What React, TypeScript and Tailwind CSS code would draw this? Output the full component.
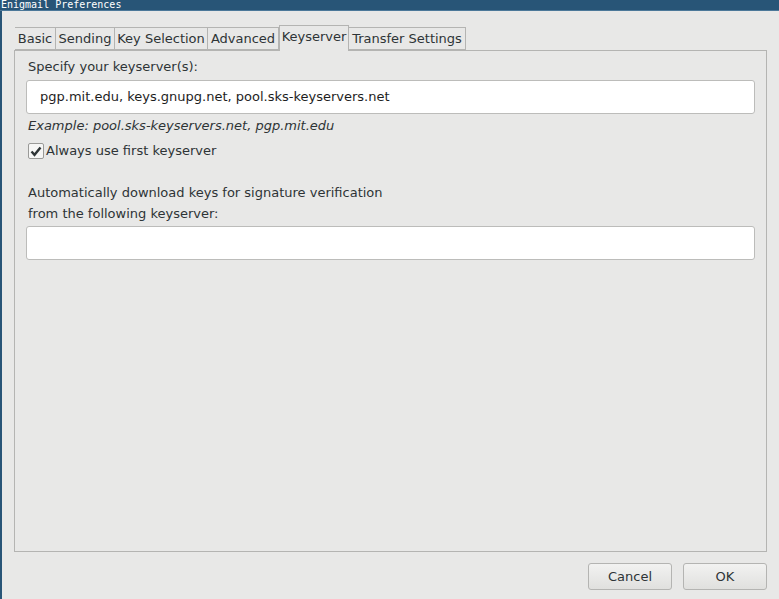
import React from 'react';

const tabs = [
  { t: 'Basic', w: 'w-[41px] border-l' },
  { t: 'Sending', w: 'w-[59px]' },
  { t: 'Key Selection', w: 'w-[93px]' },
  { t: 'Advanced', w: 'w-[71px]' },
  { t: 'Keyserver', w: 'w-[70px]', active: true },
  { t: 'Transfer Settings', w: 'w-[117px]' },
];

function Check() {
  return (
    <span className="flex h-[16px] w-[16px] items-center justify-center rounded-[2px] border border-[#9a9a98] bg-[#f6f6f5]">
      <svg width="12" height="11" viewBox="0 0 12 11">
        <path d="M1.5 5.5 L4.5 8.8 L10.5 1.5" fill="none" stroke="#2e3436" strokeWidth="2.4" />
      </svg>
    </span>
  );
}

export default function App() {
  return (
    <div className="flex h-[599px] w-[779px] flex-col bg-[#e8e8e7] font-['DejaVu_Sans',sans-serif] text-[13px] text-[#2e3436]">
      <div className="h-[11px] shrink-0 border-b border-[#4c7899] bg-[#285577] pl-[1px] font-['DejaVu_Sans_Mono',monospace] text-[10px] leading-[10px] text-white">
        Enigmail Preferences
      </div>
      <div className="flex flex-1 flex-col border-l-2 border-[#285577]">
        <div className="flex items-end pl-[13px] pt-[14px]">
          {tabs.map((x) =>
            x.active ? (
              <div
                key={x.t}
                className={`relative z-10 -mb-px flex h-[26px] items-center justify-center border border-b-0 border-[#b4b4b2] bg-[#e8e8e7] pb-[3px] ${x.w}`}
              >
                {x.t}
              </div>
            ) : (
              <div
                key={x.t}
                className={`flex h-[23px] items-center justify-center border border-l-0 border-[#b4b4b2] ${x.w}`}
              >
                {x.t}
              </div>
            )
          )}
        </div>
        <div className="ml-[12px] mr-[12px] h-[502px] border border-[#b4b4b2] px-[11px] pt-[7px]">
          <div className="pl-[2px] leading-[18px]">Specify your keyserver(s):</div>
          <div className="mt-[4px] flex h-[34px] items-center rounded-[3px] border border-[#bcbcba] bg-white pl-[13px] text-[#1e1e1e]">
            pgp.mit.edu, keys.gnupg.net, pool.sks-keyservers.net
          </div>
          <div className="mt-[3px] pl-[2px] italic leading-[18px]">Example: pool.sks-keyservers.net, pgp.mit.edu</div>
          <div className="mt-[7px] flex items-center pl-[2px] leading-[18px]">
            <Check />
            <span className="ml-[2px]">Always use first keyserver</span>
          </div>
          <div className="mt-[22px] pl-[2px] leading-[21px]">
            Automatically download keys for signature verification
            <br />
            from the following keyserver:
          </div>
          <div className="mt-[2px] h-[34px] rounded-[3px] border border-[#bcbcba] bg-white" />
        </div>
        <div className="flex justify-end gap-[11px] pr-[12px] pt-[11px]">
          <button className="h-[27px] w-[84px] rounded-[3px] border border-[#b4b4b2] bg-gradient-to-b from-[#f2f2f1] to-[#e0e0de]">
            Cancel
          </button>
          <button className="h-[27px] w-[84px] rounded-[3px] border border-[#b4b4b2] bg-gradient-to-b from-[#f2f2f1] to-[#e0e0de]">
            OK
          </button>
        </div>
      </div>
    </div>
  );
}
